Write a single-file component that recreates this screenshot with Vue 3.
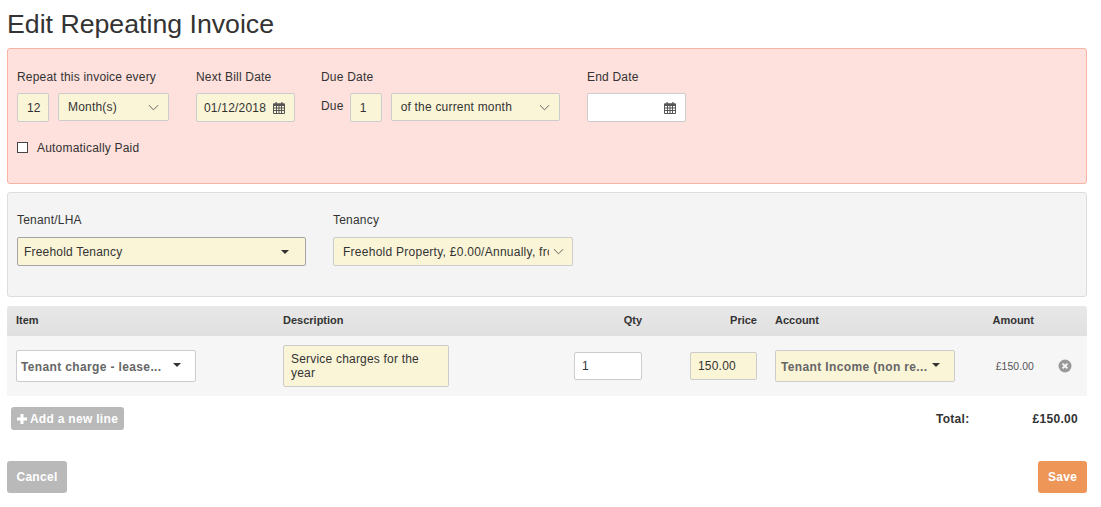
<template>
  <main class="page">
    <h1 class="title">Edit Repeating Invoice</h1>

    <section class="panel pink">
      <div class="fields">
        <div class="field f-repeat">
          <label class="label">Repeat this invoice every</label>
          <div class="line">
            <input class="input yellow w32" value="12" />
            <div class="select yellow w111 low"><span class="val">Month(s)</span><svg class="chev" viewBox="0 0 12 7"><path d="M1 1l5 5 5-5" /></svg></div>
          </div>
        </div>
        <div class="field f-next">
          <label class="label">Next Bill Date</label>
          <div class="date yellow w99"><span class="val">01/12/2018</span><svg class="cal" viewBox="0 0 12 12"><use href="#cal" /></svg></div>
        </div>
        <div class="field f-due">
          <label class="label">Due Date</label>
          <div class="line">
            <span class="due">Due</span>
            <input class="input yellow w32" value="1" />
            <div class="select yellow w169 low"><span class="val">of the current month</span><svg class="chev" viewBox="0 0 12 7"><path d="M1 1l5 5 5-5" /></svg></div>
          </div>
        </div>
        <div class="field">
          <label class="label">End Date</label>
          <div class="date white w99"><span class="val"></span><svg class="cal" viewBox="0 0 12 12"><use href="#cal" /></svg></div>
        </div>
      </div>
      <div class="auto"><span class="check"></span><span>Automatically Paid</span></div>
    </section>

    <section class="panel grey">
      <div class="field f-tenant">
        <label class="label">Tenant/LHA</label>
        <div class="select yellow w289 dark"><span class="val">Freehold Tenancy</span><span class="caret"></span></div>
      </div>
      <div class="field">
        <label class="label">Tenancy</label>
        <div class="select yellow w240 clip"><span class="clipval">Freehold Property, £0.00/Annually, from</span><svg class="chev" viewBox="0 0 12 7"><path d="M1 1l5 5 5-5" /></svg></div>
      </div>
    </section>

    <section class="table">
      <div class="grid head">
        <div>Item</div>
        <div>Description</div>
        <div class="r">Qty</div>
        <div class="r">Price</div>
        <div class="acc">Account</div>
        <div class="r">Amount</div>
        <div></div>
      </div>
      <div class="grid row">
        <div><div class="sel2 white"><span class="ell">Tenant charge - lease...</span><span class="caret"></span></div></div>
        <div><div class="desc yellow">Service charges for the year</div></div>
        <div class="r"><input class="cell white qty" value="1" /></div>
        <div class="r"><input class="cell yellow price" value="150.00" /></div>
        <div class="acc"><div class="sel2 yellow"><span class="ell">Tenant Income (non re...</span><span class="caret"></span></div></div>
        <div class="r amount">£150.00</div>
        <div class="del">
          <svg viewBox="0 0 14 14" class="x"><circle cx="7" cy="7" r="6.500" /><path d="M4.600 4.600l4.800 4.800M9.400 4.600l-4.800 4.800" /></svg>
        </div>
      </div>
    </section>

    <div class="under">
      <button class="btn add"><svg viewBox="0 0 10 10" class="plus"><path d="M3.500 0h3v3.500H10v3H6.500V10h-3V6.500H0v-3h3.500z" /></svg>Add a new line</button>
      <div class="total"><span class="tl">Total:</span><span class="tv">£150.00</span></div>
    </div>

    <div class="actions">
      <button class="btn big cancel">Cancel</button>
      <button class="btn big save">Save</button>
    </div>

    <svg width="0" height="0" class="defs">
      <symbol id="cal" viewBox="0 0 12 12">
        <path fill="#555" fill-rule="evenodd" d="M2.500 0h1.200v1.200h4.600V0h1.200v1.200H11a1 1 0 0 1 1 1V11a1 1 0 0 1-1 1H1a1 1 0 0 1-1-1V2.200a1 1 0 0 1 1-1h1.500zM1 4v1.500h2V4zm3 0v1.500h1.500V4zm2.500 0v1.500H8V4zM9 4v1.500h2V4zM1 6.500V8h2V6.500zm3 0V8h1.500V6.500zm2.500 0V8H8V6.500zm2.500 0V8h2V6.500zM1 9v2h2V9zm3 0v2h1.500V9zm2.500 0v2H8V9zM9 9v2h2V9z" />
      </symbol>
    </svg>
  </main>
</template>

<script setup>
</script>

<style>
html, body { margin: 0; background: #fff; }
</style>

<style scoped>
.page {
  width: 1080px;
  padding: 0 14px 0 7px;
  font-family: "Liberation Sans", Arial, sans-serif;
  font-size: 12px;
  letter-spacing: 0.2px;
  color: #333;
  box-sizing: content-box;
}
.defs { position: absolute; }
.title {
  margin: 0;
  height: 48px;
  font-size: 26.7px;
  font-weight: 400;
  line-height: 48px;
  letter-spacing: 0;
}
.panel { box-sizing: border-box; border-radius: 3px; border: 1px solid; }
.pink { height: 136px; background: #fee0dc; border-color: #f9b4a4; padding: 20px 9px 0; }
.grey { height: 105px; margin-top: 8px; background: #f4f4f4; border-color: #ddd; padding: 19px 9px 0; display: flex; }
.grey .label { margin-bottom: 9px; }
.fields { display: flex; }
.f-repeat { width: 179px; }
.f-next { width: 125px; }
.f-due { width: 266px; }
.f-tenant { width: 316px; }
.label { display: block; height: 16px; line-height: 16px; margin-bottom: 8px; }
.line { display: flex; align-items: flex-start; }
.yellow { background: #fbf5d8; }
.white { background: #fff; }
.input, .select, .date {
  box-sizing: border-box;
  border: 1px solid #ccc;
  border-radius: 2px;
  height: 29px;
  font: inherit;
  letter-spacing: inherit;
  color: #333;
}
.input { padding: 1px 0 0 9px; margin: 0; outline: none; }
.w32 { width: 32px; }
.select, .date { display: flex; align-items: center; justify-content: space-between; }
.select { padding: 0 9px; margin-left: 9px; }
.select.low { height: 28px; }
.field > .select { margin-left: 0; }
.w111 { width: 111px; }
.w169 { width: 169px; }
.w289 { width: 289px; border-color: #a5a5a5; }
.w240 { width: 240px; }
.w99 { width: 99px; }
.date { padding: 0 9px 0 7px; }
.val { white-space: nowrap; }
.chev { width: 11px; height: 7px; flex: none; fill: none; stroke: #555; stroke-width: 1; }
.cal { width: 12px; height: 12px; flex: none; }
.due { margin: 5px 6px 0 0; line-height: 16px; }
.auto { display: flex; align-items: center; margin-top: 20px; height: 11px; }
.check { box-sizing: border-box; width: 11px; height: 11px; border: 1px solid #444; background: #fff; margin-right: 9px; }
.caret { width: 0; height: 0; border-left: 4px solid transparent; border-right: 4px solid transparent; border-top: 4px solid #333; flex: none; }
.dark { padding: 0 16px 0 6px; }
.dark .caret { margin-top: 1px; }
.clip { padding: 0 8px 0 9px; gap: 4px; letter-spacing: 0.26px; }
.clipval { overflow: hidden; white-space: nowrap; flex: 1; min-width: 0; }
.table { margin-top: 9px; }
.grid { display: grid; grid-template-columns: 267px 166px 193px 115px 198px 79px 53px; padding-left: 9px; width: 1071px; }
.head {
  align-items: center;
  padding-bottom: 2px;
  box-sizing: content-box;
  height: 28px;
  background: linear-gradient(#e8e8e8, #e0e0e0);
  font-size: 11px;
  font-weight: 700;
  letter-spacing: 0;
  border-radius: 3px 3px 0 0;
}
.row { height: 60px; align-items: center; background: #f6f6f6; }
.r { text-align: right; }
.acc { padding-left: 18px; }
.sel2 {
  box-sizing: border-box;
  width: 180px;
  height: 32px;
  border: 1px solid #ccc;
  border-radius: 2px;
  display: flex;
  align-items: center;
  padding: 1px 14px 0 4px;
  gap: 9px;
  font-weight: 700;
  letter-spacing: 0.36px;
  color: #666;
  text-align: left;
}
.acc .sel2 { padding-left: 5px; }
.sel2 .caret { margin-top: -3px; }
.ell { white-space: nowrap; flex: 1; min-width: 0; }
.desc {
  box-sizing: border-box;
  width: 166px;
  height: 42px;
  border: 1px solid #ccc;
  border-radius: 2px;
  padding: 6px 7px;
  line-height: 14px;
}
.cell {
  box-sizing: border-box;
  height: 28px;
  border: 1px solid #ccc;
  border-radius: 2px;
  margin: 0;
  padding: 0 7px;
  font: inherit;
  letter-spacing: inherit;
  color: #333;
  outline: none;
  display: inline-block;
  vertical-align: middle;
}
.qty { width: 68px; }
.price { width: 67px; }
.amount { font-size: 10.400px; letter-spacing: 0.1px; color: #555; }
.del { display: flex; justify-content: center; padding-left: 9px; }
.x { width: 14px; height: 14px; }
.x circle { fill: #999; }
.x path { stroke: #f6f6f6; stroke-width: 2; fill: none; }
.under { display: flex; justify-content: space-between; align-items: center; margin-top: 11px; height: 23px; padding-left: 4px; }
.btn {
  border: 0;
  margin: 0;
  border-radius: 3px;
  background: #b9b9b9;
  color: #fff;
  font-family: inherit;
  font-size: 12px;
  font-weight: 700;
  letter-spacing: 0.3px;
}
.add { width: 113px; height: 23px; padding: 0; display: flex; align-items: center; justify-content: center; gap: 3px; }
.plus { width: 10px; height: 10px; fill: #fff; }
.total { display: flex; font-weight: 700; color: #333; letter-spacing: 0.3px; }
.tl { margin-right: 63px; }
.tv { margin-right: 9px; }
.actions { display: flex; justify-content: space-between; margin-top: 31px; }
.big { height: 32px; padding: 0; }
.cancel { width: 60px; }
.save { width: 49px; background: #ee9558; }
</style>
